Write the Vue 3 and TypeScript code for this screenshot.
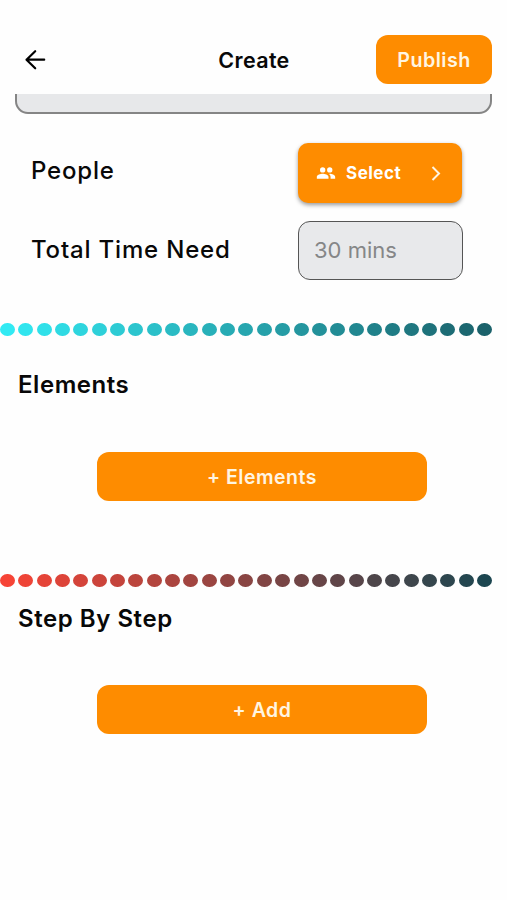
<script setup lang="ts">
type Rgb = [number, number, number]

const DOT_COUNT = 27

function ramp(from: Rgb, to: Rgb): string[] {
  return Array.from({ length: DOT_COUNT }, (_, i) => {
    const t = i / (DOT_COUNT - 1)
    const [r, g, b] = from.map((c, k) => Math.round(c + (to[k] - c) * t))
    return `rgb(${r}, ${g}, ${b})`
  })
}

const tealDots = ramp([50, 234, 243], [27, 98, 107])
const redDots = ramp([246, 68, 54], [28, 70, 80])
</script>

<template>
  <main class="screen">
    <header class="bar">
      <button class="back" aria-label="Back">
        <svg viewBox="0 0 24 24" width="24" height="24">
          <path d="M21.200 11.700H3.600M12.200 3.200L3.500 11.700l8.700 8.600" fill="none" stroke="#000" stroke-width="2.200" stroke-linecap="round" stroke-linejoin="round" />
        </svg>
      </button>
      <h1 class="title">Create</h1>
      <button class="btn publish">Publish</button>
    </header>

    <div class="clip"><div class="field-end"></div></div>

    <section class="form">
      <div class="row people">
        <span class="label label-people">People</span>
        <button class="btn select">
          <svg class="group" viewBox="0 0 24 24" width="20" height="20">
            <path fill="#fff" d="M16.500 11.500a3.200 3.200 0 1 0 0-6.400 3.200 3.200 0 0 0 0 6.400zM8 11.500a3.200 3.200 0 1 0 0-6.400 3.200 3.200 0 0 0 0 6.400zM8 13c-2.500 0-7 1.200-7 3.700V19h14v-2.300C15 14.200 10.500 13 8 13zM16.500 13l-1 .05c1.200.85 2 2 2 3.650V19H23v-2.300c0-2.500-4.200-3.700-6.500-3.700z" />
          </svg>
          <span class="select-text">Select</span>
          <svg class="chevron" viewBox="0 0 10 16" width="10" height="16">
            <path d="M1.500 2L8 8.500l-6.500 6.500" fill="none" stroke="#fff5e2" stroke-width="2" />
          </svg>
        </button>
      </div>
      <div class="row time">
        <span class="label label-time">Total Time Need</span>
        <div class="input">30 mins</div>
      </div>
    </section>

    <div class="dots">
      <i v-for="(c, i) in tealDots" :key="i" class="dot" :style="{ background: c }"></i>
    </div>
    <section class="block elements">
      <h2 class="heading">Elements</h2>
      <button class="btn wide">+ Elements</button>
    </section>

    <div class="dots">
      <i v-for="(c, i) in redDots" :key="i" class="dot" :style="{ background: c }"></i>
    </div>
    <section class="block steps">
      <h2 class="heading">Step By Step</h2>
      <button class="btn wide">+ Add</button>
    </section>
  </main>
</template>

<style>
body {
  background: #fefefe;
}
</style>

<style scoped>
.screen {
  width: 507px;
  height: 900px;
  overflow: hidden;
  font-family: Inter, "Liberation Sans", sans-serif;
  color: #080808;
}
button {
  border: 0;
  padding: 0;
  font: inherit;
  background: none;
}
.bar {
  height: 94px;
  box-sizing: border-box;
  padding: 35px 15px 0 23px;
  display: grid;
  grid-template-columns: 116px 1fr 116px;
  align-items: start;
}
.back {
  display: flex;
  padding-top: 13px;
}
.title {
  margin: 0;
  padding-right: 7px;
  line-height: 50px;
  font-size: 21.500px;
  font-weight: 600;
  letter-spacing: 0.350px;
  text-align: center;
}
.btn {
  background: #fe8c00;
  color: #fff5e2;
  font-weight: 600;
  border-radius: 12px;
}
.publish {
  height: 49px;
  font-size: 19.700px;
  letter-spacing: 0.450px;
}
.clip {
  height: 20px;
  padding: 0 15px;
  overflow: hidden;
  display: flex;
  align-items: flex-end;
}
.field-end {
  flex: 1;
  flex-shrink: 0;
  box-sizing: border-box;
  height: 60px;
  border: 2px solid #858585;
  border-radius: 13px;
  background: #e7e8ea;
}
.form {
  height: 209px;
  box-sizing: border-box;
  padding: 29px 45px 0 31px;
}
.row {
  display: flex;
  justify-content: space-between;
  align-items: center;
}
.people {
  height: 60px;
}
.time {
  height: 59px;
  margin-top: 18px;
}
.label {
  font-size: 24px;
  font-weight: 500;
  line-height: 30px;
  letter-spacing: 0.820px;
}
.label-people {
  padding-bottom: 4px;
}
.label-time {
  padding-bottom: 2px;
}
.select {
  width: 164px;
  height: 60px;
  box-sizing: border-box;
  padding: 0 21px 0 18px;
  display: flex;
  align-items: center;
  border-radius: 10px;
  box-shadow: 0 2px 4px rgba(0, 0, 0, 0.4);
}
.select-text {
  margin-left: 10px;
  color: #fff;
  font-size: 17px;
  letter-spacing: 0.500px;
  font-weight: 700;
}
.chevron {
  margin-left: auto;
}
.input {
  width: 165px;
  height: 59px;
  box-sizing: border-box;
  margin-right: -1px;
  padding-left: 15px;
  border: 1.500px solid #555;
  border-radius: 12px;
  background: #e8e9eb;
  color: #858687;
  font-size: 22px;
  line-height: 57px;
}
.dots {
  height: 13px;
  width: 492.300px;
  display: flex;
  justify-content: space-between;
}
.dot {
  width: 15px;
  height: 13px;
  border-radius: 7.200px / 6.500px;
}
.block {
  display: flex;
  flex-direction: column;
  align-items: flex-start;
}
.elements {
  height: 238px;
  padding-top: 34px;
  box-sizing: border-box;
}
.steps {
  padding-top: 17px;
}
.heading {
  margin: 0 0 0 18px;
  font-size: 24px;
  line-height: 30px;
  font-weight: 600;
  letter-spacing: 0.550px;
}
.wide {
  width: 330px;
  height: 49px;
  margin: 52px 0 0 97px;
  font-size: 19.500px;
  letter-spacing: 0.500px;
}
.steps .wide {
  margin-top: 51px;
}
</style>
